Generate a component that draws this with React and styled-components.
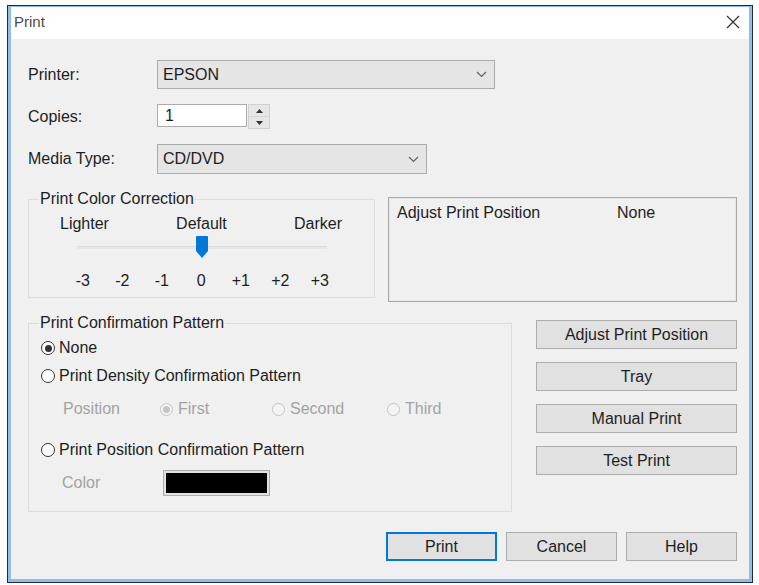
import React from "react";
import styled, { createGlobalStyle, css } from "styled-components";

const Global = createGlobalStyle`
  html, body { margin: 0; padding: 0; background: #ffffff; }
  body { font-family: "Liberation Sans", Arial, sans-serif; font-size: 16px; color: #1e1e1e; }
  * { box-sizing: border-box; }
`;

const Window = styled.div`
  margin: 5px 0 0 7px;
  width: 746px;
  height: 578px;
  border: 1px solid #1c2b3b;
  background: #94bde6;
  padding: 1px 3px 3px 3px;
  display: flex;
  flex-direction: column;
`;

const TitleBar = styled.div`
  height: 32px;
  background: #ffffff;
  display: flex;
  align-items: center;
  justify-content: space-between;
  padding: 0 6px 3px 3px;
`;

const TitleText = styled.span`
  font-size: 15px;
  color: #4a4a4a;
`;

const CloseBtn = styled.div`
  width: 20px;
  height: 20px;
  display: flex;
  align-items: center;
  justify-content: center;
`;

const Body = styled.div`
  flex: 1;
  background: #f0f0f0;
  padding: 21px 12px 0 17px;
  display: flex;
  flex-direction: column;
`;

const FormRow = styled.div`
  display: grid;
  grid-template-columns: 129px auto;
  align-items: center;
  height: ${(p) => p.$h}px;
  margin-top: ${(p) => p.$mt || 0}px;
`;

const Label = styled.span`
  line-height: 18px;
  color: ${(p) => (p.$disabled ? "#a3a3a3" : "#1e1e1e")};
`;

const Select = styled.div`
  width: ${(p) => p.$w}px;
  height: 100%;
  background: #e5e5e5;
  border: 1px solid #acacac;
  display: flex;
  align-items: center;
  justify-content: space-between;
  padding: 0 7px 0 5px;
`;

const SpinWrap = styled.div`
  display: flex;
  align-items: flex-start;
  height: 100%;
`;

const NumInput = styled.div`
  width: 90px;
  height: 23px;
  background: #ffffff;
  border: 1px solid #acacac;
  display: flex;
  align-items: center;
  padding-left: 7px;
`;

const Spinner = styled.div`
  width: 22px;
  height: 25px;
  margin-left: 1px;
  display: flex;
  flex-direction: column;
  border: 1px solid #d0d0d0;
  background: #e6e6e6;
`;

const SpinHalf = styled.div`
  flex: 1;
  display: flex;
  align-items: center;
  justify-content: center;
  ${(p) => p.$top && css`border-bottom: 1px solid #d6d6d6;`}
`;

const Section = styled.div`
  display: flex;
  align-items: flex-start;
  gap: ${(p) => p.$gap}px;
  margin-top: ${(p) => p.$mt}px;
`;

const Group = styled.fieldset`
  margin: 0;
  padding: 0 0 ${(p) => p.$pb}px 0;
  border: 1px solid #dcdcdc;
  width: ${(p) => p.$w}px;
  min-width: 0;
  display: flex;
  flex-direction: column;
`;

const Legend = styled.legend`
  font-size: 16px;
  line-height: 16px;
  padding: 0 1px;
  margin-left: 10px;
  color: #1e1e1e;
`;

const ScaleLabels = styled.div`
  display: flex;
  justify-content: space-between;
  padding: 0 32px 0 31px;
  margin-top: 8px;
  line-height: 17px;
`;

const SliderArea = styled.div`
  position: relative;
  height: 22px;
  margin: 4px 47px 0 48px;
  display: flex;
  align-items: center;
`;

const Track = styled.div`
  width: 100%;
  height: 3px;
  background: #e7e7e7;
  border-top: 1px solid #dcdcdc;
`;

const Thumb = styled.svg`
  position: absolute;
  left: 50%;
  top: 0;
  transform: translateX(-50%);
`;

const Ticks = styled.div`
  display: grid;
  grid-template-columns: repeat(7, 39.5px);
  margin: 14px 0 0 34px;
  line-height: 17px;
  text-align: center;
`;

const InfoBox = styled.div`
  margin-top: 6px;
  width: ${(p) => p.$w}px;
  height: 105px;
  border: 1px solid #a9a9a9;
  box-shadow: inset 0 0 0 1px #e6e6e6;
  display: grid;
  grid-template-columns: 220px auto;
  align-content: start;
  padding: 6px 8px;
  line-height: 17px;
`;

const RadioRow = styled.div`
  display: flex;
  align-items: center;
  height: ${(p) => p.$h || 20}px;
  margin-top: ${(p) => p.$mt}px;
  padding-left: ${(p) => p.$pl || 12}px;
`;

const RadioItem = styled.div`
  display: flex;
  align-items: center;
  width: ${(p) => (p.$w ? `${p.$w}px` : "auto")};
  color: ${(p) => (p.$disabled ? "#a3a3a3" : "#1e1e1e")};
`;

const RadioCircle = styled.span`
  width: ${(p) => (p.$disabled ? 13 : 14)}px;
  height: ${(p) => (p.$disabled ? 13 : 14)}px;
  border-radius: 50%;
  border: 1px solid ${(p) => (p.$disabled ? "#c4c4c4" : "#333333")};
  background: ${(p) => (p.$disabled ? "#f4f4f4" : "#ffffff")};
  display: flex;
  align-items: center;
  justify-content: center;
  margin-right: ${(p) => p.$gap || 5}px;
  flex-shrink: 0;
  &::after {
    content: "";
    display: ${(p) => (p.$checked ? "block" : "none")};
    width: 7px;
    height: 7px;
    border-radius: 50%;
    background: ${(p) => (p.$disabled ? "#c4c4c4" : "#333333")};
  }
`;

const Swatch = styled.div`
  width: 107px;
  height: 26px;
  border: 1px solid #adadad;
  background: #e1e1e1;
  padding: 2px;
  &::after {
    content: "";
    display: block;
    width: 100%;
    height: 100%;
    background: #000000;
  }
`;

const ButtonColumn = styled.div`
  margin-top: 5px;
  width: 201px;
  display: flex;
  flex-direction: column;
  gap: 13px;
`;

const Button = styled.div`
  height: 29px;
  width: ${(p) => (p.$w ? `${p.$w}px` : "100%")};
  background: #e1e1e1;
  border: 1px solid ${(p) => (p.$primary ? "#0078d7" : "#adadad")};
  ${(p) => p.$primary && css`box-shadow: inset 0 0 0 1px #0078d7;`}
  display: flex;
  align-items: center;
  justify-content: center;
  color: #1e1e1e;
  line-height: 17px;
`;

const Footer = styled.div`
  display: flex;
  justify-content: flex-end;
  gap: 9px;
  margin-top: 20px;
`;

const Chevron = () => (
  <svg width="11" height="7" viewBox="0 0 11 7">
    <polyline points="1,1 5.5,5.5 10,1" fill="none" stroke="#606060" strokeWidth="1.2" />
  </svg>
);

const Tri = ({ up }) => (
  <svg width="7" height="4" viewBox="0 0 7 4">
    <polygon points={up ? "0,4 3.5,0 7,4" : "0,0 3.5,4 7,0"} fill="#333" />
  </svg>
);

export default function App() {
  return (
    <>
      <Global />
      <Window>
        <TitleBar>
          <TitleText>Print</TitleText>
          <CloseBtn>
            <svg width="14" height="14" viewBox="0 0 14 14">
              <path d="M1 1 L13 13 M13 1 L1 13" stroke="#333" strokeWidth="1.2" fill="none" />
            </svg>
          </CloseBtn>
        </TitleBar>
        <Body>
          <FormRow $h={29}>
            <Label>Printer:</Label>
            <Select $w={338}>
              <span>EPSON</span>
              <Chevron />
            </Select>
          </FormRow>
          <FormRow $h={25} $mt={15}>
            <Label>Copies:</Label>
            <SpinWrap>
              <NumInput>1</NumInput>
              <Spinner>
                <SpinHalf $top>
                  <Tri up />
                </SpinHalf>
                <SpinHalf>
                  <Tri />
                </SpinHalf>
              </Spinner>
            </SpinWrap>
          </FormRow>
          <FormRow $h={30} $mt={15}>
            <Label>Media Type:</Label>
            <Select $w={270}>
              <span>CD/DVD</span>
              <Chevron />
            </Select>
          </FormRow>

          <Section $mt={17} $gap={13}>
            <Group $w={347} $pb={8}>
              <Legend>Print Color Correction</Legend>
              <ScaleLabels>
                <span>Lighter</span>
                <span>Default</span>
                <span>Darker</span>
              </ScaleLabels>
              <SliderArea>
                <Track />
                <Thumb width="12" height="22" viewBox="0 0 12 22">
                  <path d="M1 0 H11 Q12 0 12 1 V15 L6 22 L0 15 V1 Q0 0 1 0 Z" fill="#0078d7" />
                </Thumb>
              </SliderArea>
              <Ticks>
                {["-3", "-2", "-1", "0", "+1", "+2", "+3"].map((t) => (
                  <span key={t}>{t}</span>
                ))}
              </Ticks>
            </Group>
            <InfoBox $w={349}>
              <span>Adjust Print Position</span>
              <span>None</span>
            </InfoBox>
          </Section>

          <Section $mt={13} $gap={24}>
            <Group $w={484} $pb={15}>
              <Legend>Print Confirmation Pattern</Legend>
              <RadioRow $mt={7}>
                <RadioItem>
                  <RadioCircle $checked $gap={4} />
                  None
                </RadioItem>
              </RadioRow>
              <RadioRow $mt={8}>
                <RadioItem>
                  <RadioCircle $gap={4} />
                  Print Density Confirmation Pattern
                </RadioItem>
              </RadioRow>
              <RadioRow $mt={13} $pl={34}>
                <RadioItem $w={97} $disabled>Position</RadioItem>
                <RadioItem $w={112} $disabled>
                  <RadioCircle $disabled $checked />
                  First
                </RadioItem>
                <RadioItem $w={115} $disabled>
                  <RadioCircle $disabled />
                  Second
                </RadioItem>
                <RadioItem $disabled>
                  <RadioCircle $disabled />
                  Third
                </RadioItem>
              </RadioRow>
              <RadioRow $mt={21}>
                <RadioItem>
                  <RadioCircle $gap={4} />
                  Print Position Confirmation Pattern
                </RadioItem>
              </RadioRow>
              <RadioRow $mt={10} $h={26} $pl={33}>
                <RadioItem $w={101} $disabled>Color</RadioItem>
                <Swatch />
              </RadioRow>
            </Group>
            <ButtonColumn>
              <Button>Adjust Print Position</Button>
              <Button>Tray</Button>
              <Button>Manual Print</Button>
              <Button>Test Print</Button>
            </ButtonColumn>
          </Section>

          <Footer>
            <Button $w={111} $primary>Print</Button>
            <Button $w={111}>Cancel</Button>
            <Button $w={111}>Help</Button>
          </Footer>
        </Body>
      </Window>
    </>
  );
}
